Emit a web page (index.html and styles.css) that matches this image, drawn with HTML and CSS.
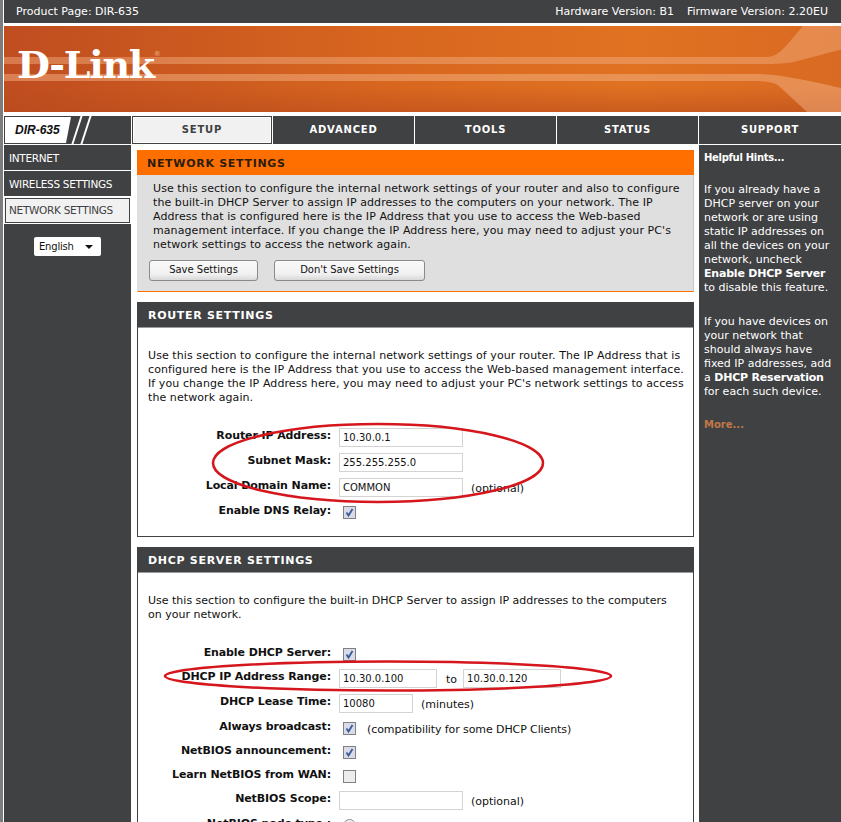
FILE: index.html
```html
<!DOCTYPE html>
<html lang="en">
  <head>
    <meta charset="UTF-8" />
    <title>D-Link DIR-635 Network Settings</title>
    <link rel="stylesheet" href="styles.css">
  </head>
  <body>
    <div class="page">
      <div class="topbar">
        <span>Product Page: DIR-635</span>
        <span class="versions"><span>Hardware Version: B1</span><span>Firmware Version: 2.20EU</span></span>
      </div>

      <div class="banner">
        <svg class="banner-art" viewBox="0 0 837 86" preserveAspectRatio="none">
          <defs>
            <linearGradient id="bannerbg" x1="0" x2="1" y1="0" y2="0">
              <stop offset="0" stop-color="#bf4d20" />
              <stop offset="0.45" stop-color="#d8661f" />
              <stop offset="0.75" stop-color="#e07222" />
              <stop offset="1" stop-color="#d96a22" />
            </linearGradient>
            <linearGradient id="bannerfade" x1="0" x2="0" y1="0" y2="1">
              <stop offset="0.7" stop-color="#b84a1c" stop-opacity="0" />
              <stop offset="1" stop-color="#b84a1c" stop-opacity="0.55" />
            </linearGradient>
          </defs>
          <rect width="837" height="86" fill="url(#bannerbg)" />
          <rect width="837" height="86" fill="url(#bannerfade)" />
          <path d="M0 31H763C770 31 775 27 782 20L799 0H837V23.6L790 36C780 38 770 38 750 38H0Z" fill="#f3b184" fill-opacity="0.45" />
          <path d="M0 48H753C775 48 810 56 837 62V86H803L775 60C770 56 760 55 750 55H0Z" fill="#f3b184" fill-opacity="0.5" />
        </svg>
        <div class="logo">D-Link<sup>®</sup></div>
      </div>

      <div class="nav">
        <div class="model"><span class="model-name">DIR-635</span><span class="slash"></span><span class="slash"></span></div>
        <div class="tab tab-active">SETUP</div>
        <div class="tab">ADVANCED</div>
        <div class="tab">TOOLS</div>
        <div class="tab">STATUS</div>
        <div class="tab">SUPPORT</div>
      </div>

      <div class="columns">
        <div class="sidebar">
          <div class="side-link">INTERNET</div>
          <div class="side-link">WIRELESS SETTINGS</div>
          <div class="side-link side-active">NETWORK SETTINGS</div>
          <div class="lang"><span>English</span><i class="lang-arrow"></i></div>
        </div>

        <div class="content">
          <div class="intro">
            <h2>NETWORK SETTINGS</h2>
            <p>Use this section to configure the internal network settings of your router and also to configure the built-in DHCP Server to assign IP addresses to the computers on your network. The IP Address that is configured here is the IP Address that you use to access the Web-based management interface. If you change the IP Address here, you may need to adjust your PC's network settings to access the network again.</p>
            <div class="buttons">
              <button class="btn btn-save">Save Settings</button>
              <button class="btn btn-nosave">Don't Save Settings</button>
            </div>
          </div>

          <div class="box box-router">
            <h2>ROUTER SETTINGS</h2>
            <p>Use this section to configure the internal network settings of your router. The IP Address that is configured here is the IP Address that you use to access the Web-based management interface. If you change the IP Address here, you may need to adjust your PC's network settings to access the network again.</p>
            <div class="form form-router">
              <div class="row"><label>Router IP Address:</label><input class="field" value="10.30.0.1"></div>
              <div class="row"><label>Subnet Mask:</label><input class="field" value="255.255.255.0"></div>
              <div class="row"><label>Local Domain Name:</label><input class="field" value="COMMON"><span class="note">(optional)</span></div>
              <div class="row"><label>Enable DNS Relay:</label><input class="check" type="checkbox" checked></div>
            </div>
          </div>

          <div class="box box-dhcp">
            <h2>DHCP SERVER SETTINGS</h2>
            <p>Use this section to configure the built-in DHCP Server to assign IP addresses to the computers on your network.</p>
            <div class="form form-dhcp">
              <div class="row row-short"><label>Enable DHCP Server:</label><input class="check" type="checkbox" checked></div>
              <div class="row"><label>DHCP IP Address Range:</label><input class="field field-range" value="10.30.0.100"><span class="to">to</span><input class="field field-range" value="10.30.0.120"></div>
              <div class="row"><label>DHCP Lease Time:</label><input class="field field-lease" value="10080"><span class="note">(minutes)</span></div>
              <div class="row row-short"><label>Always broadcast:</label><input class="check" type="checkbox" checked><span class="note note-check">(compatibility for some DHCP Clients)</span></div>
              <div class="row row-short"><label>NetBIOS announcement:</label><input class="check" type="checkbox" checked></div>
              <div class="row row-short"><label>Learn NetBIOS from WAN:</label><input class="check" type="checkbox"></div>
              <div class="row"><label>NetBIOS Scope:</label><input class="field" value=""><span class="note">(optional)</span></div>
              <div class="row"><label>NetBIOS node type :</label><input class="radio" type="radio"><span class="note note-check">Broadcast only (use when no WINS servers configured)</span></div>
            </div>
          </div>
        </div>

        <div class="hints">
          <h3>Helpful Hints...</h3>
          <p class="hint-first">If you already have a DHCP server on your network or are using static IP addresses on all the devices on your network, uncheck <b>Enable DHCP Server</b> to disable this feature.</p>
          <p>If you have devices on your network that should always have fixed IP addresses, add a <b>DHCP Reservation</b> for each such device.</p>
          <p class="more">More...</p>
        </div>
      </div>

      <!-- red rings drawn on top of the screenshot -->
      <svg class="rings" viewBox="0 0 841 822">
        <ellipse cx="378" cy="463" rx="165" ry="39" />
        <ellipse cx="388" cy="676" rx="223" ry="14.5" />
      </svg>
    </div>
  </body>
</html>
```

FILE: styles.css
```css
html,
body {
  margin: 0;
  padding: 0;
  height: 822px;
  overflow: hidden;
  background: #fff;
}
body {
  font-family: "DejaVu Sans", sans-serif;
  font-size: 11px;
  color: #111;
}
.page {
  position: relative;
  height: 822px;
  border-left: 3px solid #7d7d7d;
  padding-left: 1px;
  box-sizing: border-box;
}

/* top bar */
.topbar {
  display: flex;
  justify-content: space-between;
  height: 23px;
  line-height: 24px;
  padding: 0 13px 0 12px;
  background: #404143;
  color: #fff;
}
.versions {
  display: flex;
  gap: 13px;
}

/* banner */
.banner {
  position: relative;
  height: 86px;
  margin: 3px 0 4px;
  overflow: hidden;
}
.banner-art {
  position: absolute;
  left: 0;
  top: 0;
  width: 100%;
  height: 100%;
}
.logo {
  position: relative;
  padding: 17px 0 0 13px;
  font-family: "DejaVu Serif", serif;
  font-size: 38px;
  line-height: 44px;
  font-weight: 700;
  letter-spacing: -1.3px;
  color: #fff;
}
.logo sup {
  font-family: "DejaVu Sans", sans-serif;
  font-size: 7px;
  line-height: 0;
  font-weight: 400;
  letter-spacing: 0;
  vertical-align: 22px;
  color: #eeb08a;
}

/* nav */
.nav {
  display: grid;
  grid-template-columns: 127px 141px 142px 142px 142px 143px;
  height: 27px;
}
.model {
  display: flex;
  align-items: stretch;
  background: #404143;
  overflow: hidden;
}
.model-name {
  width: 66px;
  padding-left: 10px;
  margin: 1px 0 1px 1px;
  box-sizing: border-box;
  background: #fff;
  clip-path: polygon(0 0, 100% 0, calc(100% - 5px) 100%, 0 100%);
  font-family: "Liberation Sans", sans-serif;
  font-size: 12px;
  line-height: 26px;
  font-weight: 700;
  font-style: italic;
}
.slash {
  width: 2px;
  margin-left: 5px;
  background: #fff;
  transform: skewX(-18deg);
}
.slash + .slash {
  margin-left: 7px;
}
.tab {
  background: #404143;
  border-left: 1px solid #fff;
  color: #fff;
  text-align: center;
  font-size: 10px;
  line-height: 28px;
  font-weight: 700;
  letter-spacing: 0.8px;
}
.tab-active {
  background: #f1f1f1;
  color: #404143;
  border: 1px solid #404143;
  box-shadow: inset 0 0 0 1px #fff;
  line-height: 26px;
  margin-left: 1px;
}

/* columns */
.columns {
  display: grid;
  grid-template-columns: 127px 568px 142px;
  margin-top: 2px;
  height: 677px;
}
.sidebar {
  background: #404143;
}
.side-link {
  height: 25px;
  line-height: 27px;
  padding-left: 5px;
  color: #fff;
  border-bottom: 1px solid #fff;
  font-size: 10.5px;
  letter-spacing: -0.3px;
}
.side-active {
  background: #f1f1f1;
  color: #404143;
  border: 1px solid #fff;
  border-left: 0;
  line-height: 25px;
  outline: 1px solid #404143;
  outline-offset: -2px;
}
.lang {
  display: flex;
  align-items: center;
  justify-content: space-between;
  width: 67px;
  height: 19px;
  margin: 13px 0 0 30px;
  padding: 0 8px 0 5px;
  box-sizing: border-box;
  background: #fff;
  color: #111;
  border-radius: 2px;
  font-size: 10px;
  letter-spacing: -0.2px;
}
.lang-arrow {
  border: 4px solid transparent;
  border-top: 4px solid #111;
  border-bottom: 0;
}

/* main column */
.content {
  padding: 5px 5px 0 6px;
  background: #fff;
  overflow: hidden;
}
h2 {
  margin: 0;
  height: 25px;
  line-height: 26px;
  padding-left: 10px;
  font-size: 11px;
  font-weight: 700;
  letter-spacing: 0.7px;
}
p {
  margin: 0;
  line-height: 14px;
}
.intro {
  height: 142px;
  box-sizing: border-box;
  background: #dfdfdf;
  border: 1px solid #ff6f00;
  border-top: 0;
  border-left-color: #dfdfdf;
  border-right-color: #c8c8c8;
}
.intro h2 {
  background: #ff6f00;
  color: #2a1c10;
  margin: 0 -1px;
  line-height: 28px;
}
.intro p {
  padding: 7px 12px 0 15px;
  letter-spacing: 0.08px;
}
.buttons {
  display: flex;
  gap: 16px;
  margin: 8px 0 0 11px;
}
.btn {
  height: 21px;
  padding: 0 0 2px;
  border: 1px solid #8a8a8a;
  border-radius: 3px;
  background: linear-gradient(#fafafa, #f0f0f0 70%, #d8d8d8);
  font-family: inherit;
  font-size: 10px;
  color: #111;
}
.btn-save {
  width: 109px;
}
.btn-nosave {
  width: 151px;
}
.box {
  margin-top: 10px;
  border: 1px solid #404143;
  box-sizing: border-box;
}
.box h2 {
  background: #404143;
  color: #fff;
  border-bottom: 1px solid #9a9a9a;
  box-sizing: content-box;
  height: 24px;
}
.box p {
  padding: 21px 9px 0 10px;
  letter-spacing: 0.08px;
}
.box-router {
  height: 235px;
}
.box-dhcp {
  height: 275px;
  border-bottom: 0;
}
.box-dhcp p {
  padding-right: 15px;
  letter-spacing: 0;
}
.form-router {
  padding-top: 20px;
}
.form-router label {
  padding-top: 2px;
}
.form-dhcp {
  padding-top: 20px;
}
.row {
  display: flex;
  align-items: center;
  height: 25px;
}
.row-short {
  height: 24px;
}
.row label {
  width: 193px;
  margin-right: 8px;
  padding-top: 1px;
  text-align: right;
  font-weight: 700;
  letter-spacing: -0.1px;
  white-space: nowrap;
  line-height: 19px;
  align-self: flex-start;
}
.field {
  width: 124px;
  height: 19px;
  margin: 0;
  padding: 1px 3px;
  box-sizing: border-box;
  border: 1px solid #d3d3d3;
  font-family: inherit;
  font-size: 10px;
  color: #111;
  background: #fff;
}
.field-range {
  width: 98px;
}
.field-lease {
  width: 74px;
}
.note {
  margin-left: 8px;
  padding-top: 2px;
}
.note-check {
  margin-left: 11px;
  white-space: nowrap;
  letter-spacing: -0.1px;
}
.to {
  margin: 0 6px 0 9px;
  padding-top: 2px;
}
.check {
  appearance: none;
  width: 13px;
  height: 13px;
  margin: 0 0 0 4px;
  box-sizing: border-box;
  border: 1px solid #808080;
  background: #ececec;
}
.check:checked {
  background: #d9dce8 url("data:image/svg+xml,%3Csvg xmlns='http://www.w3.org/2000/svg' viewBox='0 0 11 11'%3E%3Cpath d='M2.5 5.5 4.5 8.5 8.5 2' fill='none' stroke='%233a5a9a' stroke-width='1.8'/%3E%3C/svg%3E") center no-repeat;
}
.radio {
  appearance: none;
  width: 13px;
  height: 13px;
  margin: 0 0 0 4px;
  border: 1px solid #8f8f8f;
  border-radius: 50%;
  background: #eee;
}

/* hints column */
.hints {
  padding: 6px 6px 0 5px;
  background: #404143;
  color: #fff;
}
.hints h3 {
  margin: 0;
  font-size: 10px;
  line-height: 14px;
  font-weight: 700;
  letter-spacing: -0.3px;
}
.hints p {
  margin-top: 20px;
}
.hints b {
  letter-spacing: -0.2px;
}
.hints .hint-first {
  margin-top: 18px;
}
.hints .more {
  margin-top: 19px;
  color: #c07848;
  font-size: 10px;
  font-weight: 700;
}

.rings {
  position: absolute;
  left: -3px;
  top: 0;
  width: 841px;
  height: 822px;
  pointer-events: none;
}
.rings ellipse {
  fill: none;
  stroke: #d5161c;
  stroke-width: 2.5;
}
```
